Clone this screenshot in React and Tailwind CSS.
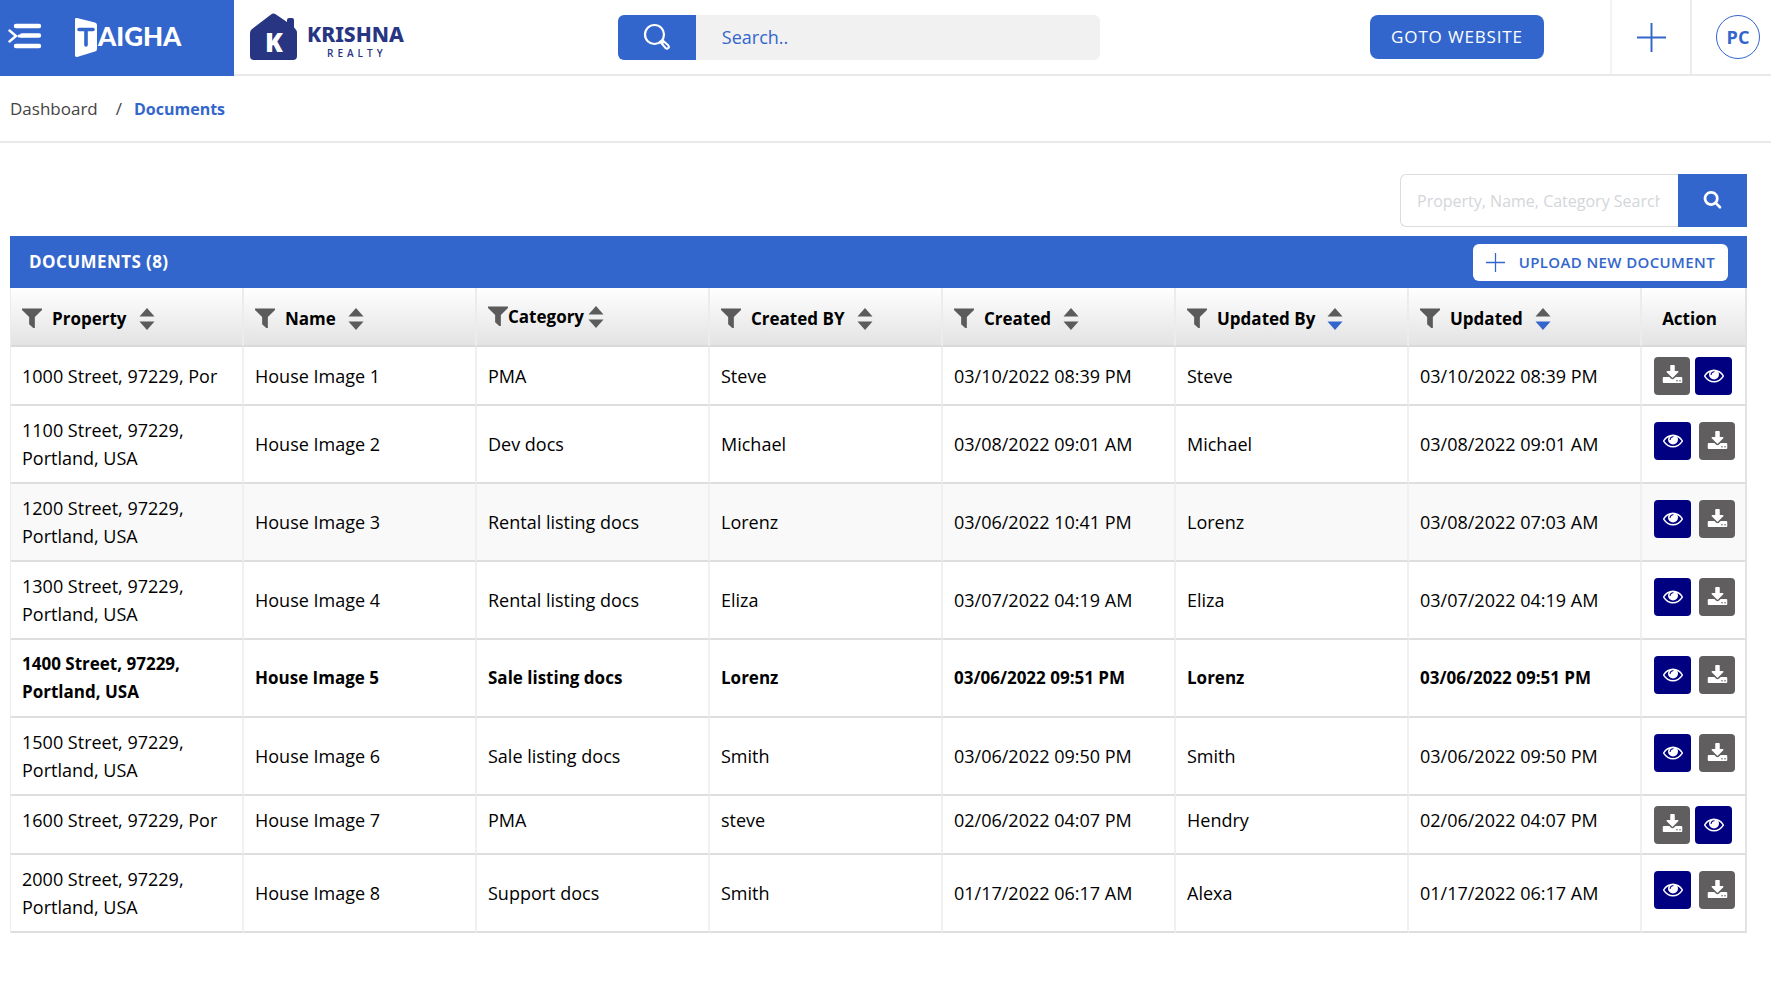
import React from "react";

const COLUMNS = [
  { label: "Property" },
  { label: "Name" },
  { label: "Category", compact: true },
  { label: "Created BY" },
  { label: "Created" },
  { label: "Updated By", sorted: true },
  { label: "Updated", sorted: true },
];

const ROWS = [
  { short: true, cells: ["1000 Street, 97229, Por", "House Image 1", "PMA", "Steve", "03/10/2022 08:39 PM", "Steve", "03/10/2022 08:39 PM"] },
  { cells: ["1100 Street, 97229, Portland, USA", "House Image 2", "Dev docs", "Michael", "03/08/2022 09:01 AM", "Michael", "03/08/2022 09:01 AM"] },
  { shaded: true, cells: ["1200 Street, 97229, Portland, USA", "House Image 3", "Rental listing docs", "Lorenz", "03/06/2022 10:41 PM", "Lorenz", "03/08/2022 07:03 AM"] },
  { cells: ["1300 Street, 97229, Portland, USA", "House Image 4", "Rental listing docs", "Eliza", "03/07/2022 04:19 AM", "Eliza", "03/07/2022 04:19 AM"] },
  { bold: true, cells: ["1400 Street, 97229, Portland, USA", "House Image 5", "Sale listing docs", "Lorenz", "03/06/2022 09:51 PM", "Lorenz", "03/06/2022 09:51 PM"] },
  { cells: ["1500 Street, 97229, Portland, USA", "House Image 6", "Sale listing docs", "Smith", "03/06/2022 09:50 PM", "Smith", "03/06/2022 09:50 PM"] },
  { short: true, top: true, cells: ["1600 Street, 97229, Por", "House Image 7", "PMA", "steve", "02/06/2022 04:07 PM", "Hendry", "02/06/2022 04:07 PM"] },
  { cells: ["2000 Street, 97229, Portland, USA", "House Image 8", "Support docs", "Smith", "01/17/2022 06:17 AM", "Alexa", "01/17/2022 06:17 AM"] },
];

function MenuIcon() {
  return (
    <svg width="34" height="26" viewBox="0 0 34 26" fill="none" stroke="white" strokeLinecap="round" aria-hidden="true">
      <path d="M8 3H31M14 12.5H31M8 23H31" strokeWidth="4.4" />
      <path d="M1.5 7.5L8 13L1.5 18.5" strokeWidth="2.4" />
      <path d="M11 13H14" strokeWidth="3" />
    </svg>
  );
}

function TaighaLogo() {
  return (
    <svg width="112" height="42" viewBox="0 0 112 42" role="img" aria-label="Taigha">
      <path d="M2 1L20 5.6Q22 6.2 22 8V32Q22 34 20 34.6L2 39.9Q0 40.2 0 38.5V2.2Q0 .6 2 1Z" fill="white" />
      <path d="M4 12.500H18M11 12.500V28" stroke="#3366cc" strokeWidth="3.6" strokeLinecap="round" />
      <text x="23" y="29" fill="white" fontFamily="Lato, sans-serif" fontWeight="900" fontSize="26">AIGHA</text>
    </svg>
  );
}

function KrishnaLogo() {
  return (
    <svg width="160" height="50" viewBox="0 0 160 50" role="img" aria-label="Krishna Realty">
      <path d="M0 20Q0 17.500 2 16L21 1.500Q23.500-.5 26 1.500L37 9V7Q37 5 39 5H42Q44 5 44 7V14.500L45 15.500Q47 17.500 47 20V43Q47 47 43 47H4Q0 47 0 43Z" fill="#283583" />
      <text x="15" y="39" fill="white" fontFamily="'Open Sans', sans-serif" fontWeight="800" fontSize="26">K</text>
      <text x="57" y="29" fill="#283583" fontFamily="'Noto Sans', sans-serif" fontWeight="800" fontSize="21">KRISHNA</text>
      <text x="77" y="44" fill="#283583" fontFamily="'Open Sans', sans-serif" fontWeight="600" fontSize="10" letterSpacing="4">REALTY</text>
    </svg>
  );
}

function HeaderSearchIcon() {
  return (
    <svg width="28" height="28" viewBox="0 0 28 28" fill="none" stroke="white" aria-hidden="true">
      <circle cx="11.500" cy="11.500" r="9.500" strokeWidth="2.2" />
      <path d="M17 18.500L22.500 25Q24 26.200 25.300 25Q26.500 23.600 25.200 22.200L19.500 17.200" strokeWidth="2" strokeLinecap="round" strokeLinejoin="round" />
      <path d="M18 18L20.500 20.500" strokeWidth="2" />
    </svg>
  );
}

function PlusIcon({ className }) {
  return (
    <svg className={className} viewBox="0 0 30 30" fill="none" stroke="#3366cc" strokeWidth="2" aria-hidden="true">
      <path d="M15 0V30M0 15H30" />
    </svg>
  );
}

function FilterIcon() {
  return (
    <svg className="shrink-0" width="20" height="21" viewBox="0 0 21 21" fill="#5b5b5b" aria-hidden="true">
      <path d="M0 0H21V1.500L13.500 9V20.500H11.800L7.500 16.500V9L0 1.500Z" />
    </svg>
  );
}

function SortIcon({ sorted }) {
  return (
    <svg className="shrink-0" width="16" height="22" viewBox="0 0 16 22" aria-hidden="true">
      <path d="M8 0L15.500 8.500H.5Z" fill="#5b5b5b" />
      <path d="M8 22L15.500 13.500H.5Z" fill={sorted ? "#3366cc" : "#5b5b5b"} />
    </svg>
  );
}

function SearchIcon() {
  return (
    <svg width="19" height="19" viewBox="0 128 1792 1792" fill="white" aria-hidden="true">
      <path d="M1216 832q0-185-131.500-316.500t-316.500-131.500-316.500 131.500-131.500 316.500 131.500 316.500 316.500 131.500 316.500-131.500 131.500-316.500zm512 832q0 52-38 90t-90 38q-54 0-90-38l-343-342q-179 124-399 124-143 0-273.500-55.500t-225-150-150-225-55.500-273.500 55.500-273.500 150-225 225-150 273.500-55.500 273.500 55.500 225 150 150 225 55.500 273.500q0 220-124 399l343 343q37 37 37 90z" />
    </svg>
  );
}

function ViewButton() {
  return (
    <button type="button" aria-label="View" className="flex h-[38px] w-[37px] items-center justify-center rounded bg-[#000080]">
      <svg width="20" height="20" viewBox="0 64 1792 1792" fill="white" aria-hidden="true">
        <path d="M1664 960q-152-236-381-353 61 104 61 225 0 185-131.500 316.500t-316.500 131.500-316.500-131.500-131.500-316.500q0-121 61-225-229 117-381 353 133 205 333.500 326.500t434.500 121.500 434.500-121.500 333.500-326.500zm-720-384q0-20-14-34t-34-14q-125 0-214.500 89.500t-89.500 214.500q0 20 14 34t34 14 34-14 14-34q0-86 61-147t147-61q20 0 34-14t14-34zm848 384q0 34-20 69-140 230-376.500 368.500t-499.500 138.500-499.500-139-376.500-368q-20-35-20-69t20-69q140-229 376.500-368t499.500-139 499.500 139 376.500 368q20 35 20 69z" />
      </svg>
    </button>
  );
}

function DownloadButton() {
  return (
    <button type="button" aria-label="Download" className="flex h-[38px] w-9 items-center justify-center rounded bg-[#605e5e]">
      <svg width="21" height="21" viewBox="0 0 1792 1792" fill="white" aria-hidden="true">
        <path d="M1344 1344q0-26-19-45t-45-19-45 19-19 45 19 45 45 19 45-19 19-45zm256 0q0-26-19-45t-45-19-45 19-19 45 19 45 45 19 45-19 19-45zm128-224v320q0 40-28 68t-68 28h-1472q-40 0-68-28t-28-68v-320q0-40 28-68t68-28h465l135 136q58 56 136 56t136-56l136-136h464q40 0 68 28t28 68zm-325-569q17 41-14 70l-448 448q-18 19-45 19t-45-19l-448-448q-31-29-14-70 17-39 59-39h256v-448q0-26 19-45t45-19h256q26 0 45 19t19 45v448h256q42 0 59 39z" />
      </svg>
    </button>
  );
}

function Header() {
  return (
    <header className="flex h-[76px] border-b-2 border-[#e9e9e9]">
      <div className="-mb-0.5 flex w-[234px] shrink-0 items-center bg-[#3366cc] pb-1 pl-2">
        <button type="button" aria-label="Toggle menu">
          <MenuIcon />
        </button>
        <a href="#home" className="mt-1 ml-[33px]">
          <TaighaLogo />
        </a>
      </div>
      <div className="flex flex-1 items-center">
        <a href="#company" className="mt-0.5 ml-4 shrink-0">
          <KrishnaLogo />
        </a>
        <div className="flex-[10]" />
        <form role="search" className="flex h-[45px] w-[482px] overflow-hidden rounded-md" onSubmit={(e) => e.preventDefault()}>
          <button type="submit" aria-label="Search" className="flex w-[78px] items-center justify-center bg-[#3366cc]">
            <HeaderSearchIcon />
          </button>
          <input
            type="text"
            aria-label="Search site"
            placeholder="Search.."
            className="min-w-0 flex-1 bg-[#f1f1f1] px-[26px] text-[18px] text-[#3366cc] outline-none placeholder:text-[#3366cc]"
          />
        </form>
        <div className="flex-[13]" />
        <a href="#website" className="mr-[66px] flex h-11 w-[174px] items-center justify-center rounded-lg bg-[#3366cc] text-[17px] font-medium tracking-wider text-white">
          GOTO WEBSITE
        </a>
      </div>
      <div className="flex shrink-0">
        <button type="button" aria-label="Add" className="flex w-20 items-center justify-center border-l-2 border-[#f3f3f3]">
          <PlusIcon className="size-[29px]" />
        </button>
        <div className="flex w-[81px] items-center justify-end border-l-2 border-[#ededed] pr-[11px]">
          <button type="button" aria-label="Account" className="size-11 rounded-full border border-[#3366cc] text-[18px] font-bold text-[#3366cc]">
            PC
          </button>
        </div>
      </div>
    </header>
  );
}

function DocumentsTable() {
  return (
    <table className="w-full table-fixed border-separate border-spacing-0 border-l border-[#ececec] text-left text-[18px] leading-7 text-black">
      <colgroup>
        {COLUMNS.map((c) => (
          <col key={c.label} />
        ))}
        <col className="w-[105px]" />
      </colgroup>
      <thead>
        <tr className="h-[59px]">
          {COLUMNS.map((c) => (
            <th
              key={c.label}
              scope="col"
              className="border-r-2 border-b-2 border-r-[#ececec] border-b-[#d9d9d9] bg-linear-to-b from-white to-[#e3e3e3] px-[11px] pt-1 text-[17px] font-bold"
            >
              <div className={c.compact ? "flex items-center pb-1" : "flex items-center"}>
                <FilterIcon />
                <span className={c.compact ? "pr-1" : "pr-3 pl-2.5"}>{c.label}</span>
                <SortIcon sorted={c.sorted} />
              </div>
            </th>
          ))}
          <th
            scope="col"
            className="border-r-2 border-b-2 border-r-[#e3e3e3] border-b-[#d9d9d9] bg-linear-to-b from-white to-[#e3e3e3] pt-1 pr-2 text-center text-[17px] font-bold"
          >
            Action
          </th>
        </tr>
      </thead>
      <tbody>
        {ROWS.map((row) => (
          <tr
            key={row.cells[1]}
            className={`${row.short ? "h-[59px]" : "h-[78px]"} ${row.shaded ? "bg-[#f9f9f9]" : ""} ${row.bold ? "text-[17px] font-bold" : ""}`}
          >
            {row.cells.map((cell, i) => (
              <td
                key={i}
                className={`border-r-2 border-b-2 border-r-[#f0f0f0] border-b-[#dedede] px-[11px] ${row.top ? "pt-2.5 align-top" : ""}`}
              >
                {cell}
              </td>
            ))}
            <td className={`border-r-2 border-b-2 border-r-[#e3e3e3] border-b-[#dedede] pl-3 ${row.short ? "" : "pb-[6px]"}`}>
              {row.short ? (
                <div className="flex gap-[5px]">
                  <DownloadButton />
                  <ViewButton />
                </div>
              ) : (
                <div className="flex gap-2">
                  <ViewButton />
                  <DownloadButton />
                </div>
              )}
            </td>
          </tr>
        ))}
      </tbody>
    </table>
  );
}

export default function App() {
  return (
    <div className="min-h-screen bg-white font-['Open_Sans','Noto_Sans',sans-serif]">
      <Header />
      <nav aria-label="Breadcrumb" className="flex h-[67px] items-center border-b-2 border-[#e9e9e9] pl-2.5 text-[17px]">
        <a href="#dashboard" className="text-[#444444]">Dashboard</a>
        <span className="pr-3 pl-[18px] text-[#444444]">/</span>
        <a href="#documents" aria-current="page" className="text-[16px] font-bold text-[#3366cc]">Documents</a>
      </nav>
      <main className="pt-[31px] pr-6 pb-8 pl-2.5">
        <form className="mb-[9px] flex h-[53px] justify-end" onSubmit={(e) => e.preventDefault()}>
          <input
            type="text"
            aria-label="Property, Name, Category Search"
            placeholder="Property, Name, Category Search"
            className="w-[278px] rounded-l-md border border-r-0 border-[#dcdcdc] pr-[18px] pl-4 text-[16px] outline-none placeholder:text-[#d3d6da]"
          />
          <button type="submit" aria-label="Search documents" className="flex w-[69px] items-center justify-center bg-[#3366cc]">
            <SearchIcon />
          </button>
        </form>
        <section>
          <div className="flex h-[52px] items-center justify-between bg-[#3366cc] pr-[19px] pl-[19px]">
            <h1 className="text-[17px] font-bold tracking-wide text-white">DOCUMENTS (8)</h1>
            <button type="button" className="flex h-[37px] items-center gap-[14px] rounded-md bg-white px-[13px] text-[15px] font-semibold tracking-wide text-[#3366cc]">
              <PlusIcon className="size-[19px]" />
              UPLOAD NEW DOCUMENT
            </button>
          </div>
          <DocumentsTable />
        </section>
      </main>
    </div>
  );
}
